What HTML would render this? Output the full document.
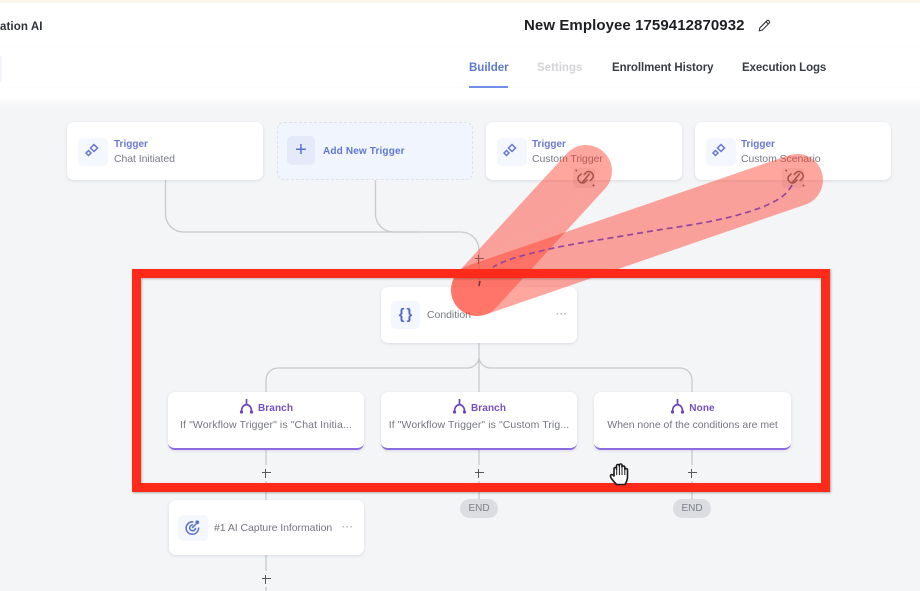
<!DOCTYPE html>
<html><head><meta charset="utf-8"><style>
html,body{margin:0;padding:0;width:920px;height:591px;overflow:hidden;background:#f4f5f7}
body{font-family:"Liberation Sans",sans-serif;position:relative}
#w{position:absolute;left:0;top:0;width:920px;height:591px;filter:blur(.35px);overflow:hidden}
.a{position:absolute;white-space:nowrap}
.c{position:absolute;width:196px;background:#fff;border-radius:7px;box-shadow:0 1px 3px rgba(30,40,70,.12)}
.ic{position:absolute;left:11px;width:30px;height:28px;border-radius:5px;background:#f4f7fd}
.t{position:absolute;left:47px;top:17px;font-size:10px;font-weight:bold;color:#6a78cf}
.s{position:absolute;left:47px;top:31px;font-size:10.5px;color:#767a82;letter-spacing:-.07px;white-space:nowrap}
.b{height:56px;border-bottom:2.5px solid #8b6be0;box-sizing:content-box;border-radius:7px}
.bt{position:absolute;top:7px;left:0;width:100%;text-align:center;font-size:10px;font-weight:bold;color:#7350c4;letter-spacing:.1px;white-space:nowrap}
.bs{position:absolute;top:27px;left:0;width:100%;text-align:center;font-size:10.5px;color:#74777f;letter-spacing:.1px;white-space:nowrap}
.end{position:absolute;width:38px;height:19px;border-radius:10px;background:#dcdde1;color:#7d8087;font-size:10px;line-height:19px;text-align:center}
.tab{position:absolute;top:62px;font-size:11.5px;font-weight:bold;white-space:nowrap}
.dots{position:absolute;font-size:10px;color:#b0b3b8;letter-spacing:.5px;font-weight:bold}
.p{position:absolute;width:12px;height:16px;background:linear-gradient(#55585d,#55585d) 50% 50%/9px 1.1px no-repeat,linear-gradient(#55585d,#55585d) 50% 50%/1.1px 9px no-repeat,#f4f5f7}
</style></head><body><div id="w">
<div class="a" style="left:0;top:0;width:920px;height:3px;background:#fdf4ec"></div>
<div class="a" style="left:0;top:3px;width:920px;height:93px;background:#fff"></div>
<div class="a" style="left:0;top:96px;width:920px;height:11px;background:linear-gradient(#fff,#f4f5f7)"></div>
<div class="a" style="left:0;top:47px;width:920px;height:1px;background:#fcfcfc"></div>
<div class="a" style="left:6px;top:87px;width:914px;height:1px;background:#fbfbfb"></div>
<div class="a" style="left:-4px;top:55px;width:6px;height:28px;background:#f2f5fc;border-radius:4px"></div>
<div class="a" style="left:0;top:21px;font-size:11.5px;font-weight:bold;color:#2e3136;letter-spacing:.1px">ation AI</div>
<div class="a" style="left:524px;top:17px;font-size:15px;font-weight:bold;color:#1d1f23;letter-spacing:.08px">New Employee 1759412870932</div>
<svg class="a" style="left:757px;top:18px" width="15" height="15" viewBox="0 0 15 15" fill="none" stroke="#33363b" stroke-width="1.1" stroke-linejoin="round"><path d="M2.2 12.8l.7-3L10 2.7a1.2 1.2 0 0 1 1.7 0l.6.6a1.2 1.2 0 0 1 0 1.7l-7.1 7.1zM9 3.7l2.3 2.3"/></svg>
<div class="tab" style="left:469px;color:#5c79d4">Builder</div>
<div class="a" style="left:469px;top:86px;width:39px;height:1.5px;background:#6f8fe8"></div>
<div class="tab" style="left:537px;color:#d3d4d7">Settings</div>
<div class="tab" style="left:612px;color:#3a3d43;letter-spacing:-.08px">Enrollment History</div>
<div class="tab" style="left:742px;color:#3a3d43;letter-spacing:-.1px">Execution Logs</div>

<svg class="a" style="left:0;top:0" width="920" height="591" fill="none" stroke="#c8cacd" stroke-width="1.3">
<path d="M165.5 180V214a18 18 0 0 0 18 18H461a18 18 0 0 1 18 18V287"/>
<path d="M375.5 180V214a18 18 0 0 0 18 18H420"/>
<path d="M479 343V500"/>
<path d="M266 392V380a12 12 0 0 1 12-12H467a12 12 0 0 0 12-10"/>
<path d="M692 392V380a12 12 0 0 0-12-12H491a12 12 0 0 1-12-10"/>
<path d="M266 449V500M692 449V500M266 555V591"/>
</svg>

<div class="c" style="left:67px;top:122px;height:58px"><div class="ic" style="top:16px"></div>
<svg class="a" style="left:17px;top:20px" width="16" height="16" viewBox="0 0 16 16" fill="none" stroke="#6478d6" stroke-width="1.5"><path d="M10 2.5L13.5 6 10 9.5 6.5 6zM4.500 8.500L7 11l-2.500 2.500L2 11z"/></svg>
<div class="t">Trigger</div><div class="s">Chat Initiated</div></div>

<div class="c" style="left:277px;top:122px;height:58px;background:#f1f5fd;box-shadow:none;outline:1px dashed #e0dff2;outline-offset:-1px">
<div class="ic" style="top:14px;left:10px;width:28px;height:29px;background:#e4eafa"></div>
<div class="a" style="left:10px;top:14px;width:28px;line-height:28px;text-align:center;font-size:20px;color:#5570c8">+</div>
<div class="a" style="left:46px;top:24px;font-size:10px;font-weight:bold;color:#5f77d2;letter-spacing:.15px">Add New Trigger</div></div>

<div class="c" style="left:486px;top:122px;height:58px"><div class="ic" style="top:16px"></div>
<svg class="a" style="left:16px;top:20px" width="16" height="16" viewBox="0 0 16 16" fill="none" stroke="#6478d6" stroke-width="1.5"><path d="M10 2.5L13.5 6 10 9.5 6.5 6zM4.500 8.500L7 11l-2.500 2.500L2 11z"/></svg>
<div class="t" style="left:46px">Trigger</div><div class="s" style="left:46px">Custom Trigger</div></div>

<div class="c" style="left:695px;top:122px;height:58px"><div class="ic" style="top:16px"></div>
<svg class="a" style="left:16px;top:20px" width="16" height="16" viewBox="0 0 16 16" fill="none" stroke="#6478d6" stroke-width="1.5"><path d="M10 2.5L13.5 6 10 9.5 6.5 6zM4.500 8.500L7 11l-2.500 2.500L2 11z"/></svg>
<div class="t" style="left:46px">Trigger</div><div class="s" style="left:46px">Custom Scenario</div></div>

<div class="c" style="left:381px;top:287px;height:56px"><div class="ic" style="top:14px;left:10px;width:29px"></div>
<div class="a" style="left:11px;top:13px;width:29px;line-height:30px;text-align:center;font-size:15px;font-weight:bold;color:#4f68c9;letter-spacing:2px">{}</div>
<div class="a" style="left:46px;top:22px;font-size:10.5px;color:#767a82;letter-spacing:-.05px">Condition</div>
<div class="dots" style="left:175px;top:22px">···</div></div>

<div class="c b" style="left:168px;top:392px"><div class="bt"><svg width="15" height="15" viewBox="0 0 15 15" fill="none" stroke="#6a44bd" stroke-width="1.7" style="vertical-align:-3px;margin-right:4px"><path d="M7.5 0v5.5M7.500 5.500C3.500 6.500 2.500 9 2.500 13M7.500 5.500c4 1 5 3.500 5 7.500"/><circle cx="2.500" cy="13" r="1.600" fill="#6a44bd" stroke="none"/><circle cx="12.500" cy="13" r="1.600" fill="#6a44bd" stroke="none"/></svg>Branch</div><div class="bs">If "Workflow Trigger" is "Chat Initia...</div></div>
<div class="c b" style="left:381px;top:392px"><div class="bt"><svg width="15" height="15" viewBox="0 0 15 15" fill="none" stroke="#6a44bd" stroke-width="1.7" style="vertical-align:-3px;margin-right:4px"><path d="M7.5 0v5.5M7.500 5.500C3.500 6.500 2.500 9 2.500 13M7.500 5.500c4 1 5 3.500 5 7.500"/><circle cx="2.500" cy="13" r="1.600" fill="#6a44bd" stroke="none"/><circle cx="12.500" cy="13" r="1.600" fill="#6a44bd" stroke="none"/></svg>Branch</div><div class="bs" style="letter-spacing:.08px">If "Workflow Trigger" is "Custom Trig...</div></div>
<div class="c b" style="left:594px;top:392px;width:197px"><div class="bt"><svg width="15" height="15" viewBox="0 0 15 15" fill="none" stroke="#6a44bd" stroke-width="1.7" style="vertical-align:-3px;margin-right:4px"><path d="M7.5 0v5.5M7.500 5.500C3.500 6.500 2.500 9 2.500 13M7.500 5.500c4 1 5 3.500 5 7.500"/><circle cx="2.500" cy="13" r="1.600" fill="#6a44bd" stroke="none"/><circle cx="12.500" cy="13" r="1.600" fill="#6a44bd" stroke="none"/></svg>None</div><div class="bs" style="letter-spacing:-.03px">When none of the conditions are met</div></div>

<div class="c" style="left:169px;top:500px;width:195px;height:55px"><div class="ic" style="top:15px;left:9px;height:26px"></div>
<svg class="a" style="left:14px;top:18px" width="19" height="19" viewBox="0 0 22 22" fill="none" stroke="#5a74d2" stroke-width="1.8"><path d="M12 4.500A7.200 7.200 0 1 0 18 11"/><path d="M11.500 8A3.400 3.400 0 1 0 14.500 11.500"/><circle cx="16.500" cy="5" r="2.200" fill="#5a74d2" stroke="none"/><path d="M10.500 11.500L15 7"/></svg>
<div class="a" style="left:45px;top:22px;font-size:10.5px;color:#74777f;letter-spacing:-.06px">#1 AI Capture Information</div>
<div class="dots" style="left:173px;top:22px">···</div></div>

<div class="p" style="left:473px;top:251px;background-color:transparent"></div>
<div class="p" style="left:260px;top:465px"></div>
<div class="p" style="left:473px;top:465px"></div>
<div class="p" style="left:686px;top:465px"></div>
<div class="p" style="left:260px;top:571px"></div>
<div class="end" style="left:460px;top:499px">END</div>
<div class="end" style="left:673px;top:499px">END</div>

<svg class="a" style="left:0;top:0" width="920" height="591" fill="none">
<line x1="586" y1="171" x2="477" y2="290" stroke="#ff3a28" stroke-opacity=".45" stroke-width="52" stroke-linecap="round"/>
<line x1="797" y1="180" x2="477" y2="290" stroke="#ff3a28" stroke-opacity=".45" stroke-width="52" stroke-linecap="round"/>
<rect x="573" y="168" width="22" height="20" rx="3" fill="#8a4a44" fill-opacity=".08"/>
<rect x="782" y="168" width="22" height="20" rx="3" fill="#8a4a44" fill-opacity=".08"/>
<path d="M582 190C578 206 560 220 530 234C515 241 503 248 493 256" stroke="#f0a89f" stroke-width="1.3" stroke-dasharray="6 4"/>
<path d="M792 185C786 196 778 200 765 206C725 222 680 226 640 233C600 240 570 244 545 250C520 256 505 260 493 267" stroke="#96459a" stroke-width="1.7" stroke-dasharray="6 4"/>
<path d="M480 281l-1 5" stroke="#7a3040" stroke-width="1.5"/>
<g stroke="#a8504a" stroke-width="1" transform="translate(583,178) scale(1.5) translate(-578.5,-180)"><path d="M577.5 177l-2 2a3 3 0 0 0 4 4l2-2M583 182l2-2a3 3 0 0 0-4-4l-2 2M578 183l5-6M574.500 175.500l-1-1M585 184.500l1 1"/></g>
<g stroke="#a8504a" stroke-width="1" transform="translate(793,178) scale(1.5) translate(-578.5,-180)"><path d="M577.5 177l-2 2a3 3 0 0 0 4 4l2-2M583 182l2-2a3 3 0 0 0-4-4l-2 2M578 183l5-6M574.500 175.500l-1-1M585 184.500l1 1"/></g>
</svg>

<div class="a" style="left:132px;top:269px;width:680px;height:205px;border:9.5px solid #ff2a1a;box-shadow:1px 1px 2px rgba(0,0,0,.3),inset 1px 1px 2px rgba(0,0,0,.25)"></div>

<svg class="a" style="left:608px;top:461px" width="24" height="26" viewBox="0 0 24 26"><path d="M7 22C5 19 2 17 2.500 14.500C3 13 5 13.500 6 15V8C6 6 8.500 6 8.500 8V5C8.500 3 11.300 3 11.300 5V4.500C11.300 2.500 14 2.500 14 4.500V6C14 4.500 16.800 4.500 16.800 6.500V8.500C17 7 19.500 7.200 19.500 9V16C19.500 19 18.500 21 17 23.500H8.500z" fill="#fff" stroke="#1c1c1e" stroke-width="1.6" stroke-linejoin="round"/><path d="M8.700 8v6M11.400 5v9M14 5.500V14M16.800 7v7" stroke="#1c1c1e" stroke-width="1"/></svg>
</div></body></html>
